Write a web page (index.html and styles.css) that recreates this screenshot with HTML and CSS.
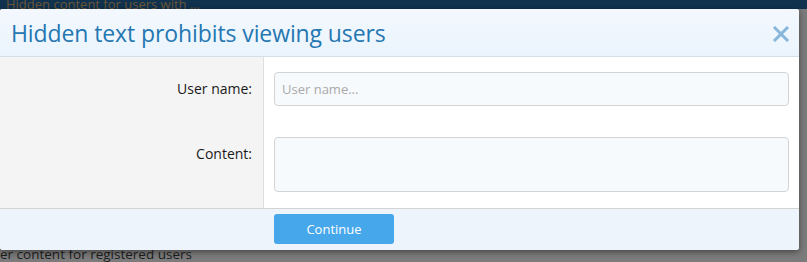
FILE: index.html
```html
<!DOCTYPE html>
<html lang="en">
<head>
    <meta charset="UTF-8">
    <title>Hidden text prohibits viewing users</title>
    <link rel="stylesheet" href="styles.css">
</head>
<body>

    <!-- Page under the overlay -->
    <div class="page">
        <div class="topbar"><span>Hidden content for users with ...</span></div>
        <p class="page-text">er content for registered users</p>
    </div>

    <!-- Dialog -->
    <div class="overlay">
        <div class="modal">
            <div class="modal-header">
                <h2>Hidden text prohibits viewing users</h2>
                <span class="close">
                    <svg width="16" height="16" viewBox="0 0 16 16">
                        <path d="M2 2 L14 14 M14 2 L2 14" stroke="#86b6da" stroke-width="3" stroke-linecap="square"/>
                    </svg>
                </span>
            </div>
            <div class="modal-body">
                <div class="row">
                    <label class="label">User name:</label>
                    <div class="field"><input type="text" placeholder="User name..."></div>
                </div>
                <div class="row">
                    <label class="label">Content:</label>
                    <div class="field"><textarea></textarea></div>
                </div>
            </div>
            <div class="modal-footer">
                <button>Continue</button>
            </div>
        </div>
    </div>

</body>
</html>
```

FILE: styles.css
```css
body {
    margin: 0;
    font-family: "Open Sans", "Noto Sans", sans-serif;
    background-color: #7b7b7b;
    height: 262px;
    overflow: hidden;
}
.topbar {
    height: 9px;
    background-color: #10324f;
    overflow: hidden;
    font-size: 13px;
    line-height: 13px;
    color: #6d5637;
}
.topbar span {
    display: block;
    margin-top: -2px;
    padding-left: 6px;
}
.page-text {
    margin: 237px 0 0 0;
    font-size: 13.5px;
    color: #1d1d1d;
    line-height: 16px;
}
.overlay {
    position: absolute;
    top: 9px;
    left: 0;
}
.modal {
    width: 799px;
    background: white;
    border-radius: 3px;
    box-shadow: 0 2px 6px rgba(0, 0, 0, 0.45);
    overflow: hidden;
}
.modal-header {
    display: flex;
    align-items: center;
    justify-content: space-between;
    height: 47px;
    padding: 0 10px 0 11px;
    background: linear-gradient(#f3f8fe, #ebf4fd);
    border-bottom: 1px solid #d6dfe8;
}
.modal-header h2 {
    margin: 0;
    font-size: 23px;
    font-weight: normal;
    color: #2577b1;
    letter-spacing: -0.1px;
}
.close {
    display: flex;
    margin-top: 2px;
}
.modal-body {
    display: grid;
    grid-template-columns: 264px 1fr;
}
.row {
    display: contents;
}
.label {
    background-color: #f4f4f4;
    border-right: 1px solid #dedede;
    text-align: right;
    font-size: 14px;
    color: #1a1a1a;
    padding: 15px 11px 16px 0;
    line-height: 34px;
}
.field {
    padding: 15px 10px 16px 10px;
}
input, textarea {
    display: block;
    box-sizing: border-box;
    width: 100%;
    border: 1px solid #d3d3d3;
    border-radius: 4px;
    background-color: #f7fafd;
    font-family: inherit;
    font-size: 13px;
    margin: 0;
}
input {
    height: 34px;
    padding: 0 7px;
}
input::placeholder {
    color: #a9a9a9;
}
textarea {
    height: 55px;
    resize: none;
}
.modal-footer {
    display: flex;
    justify-content: center;
    padding: 5px 0 6px 0;
    background-color: #edf4fc;
    border-top: 1px solid #d3d3d3;
}
button {
    width: 120px;
    height: 30px;
    margin-left: -131px;
    background-color: #47a7eb;
    color: white;
    border: none;
    border-radius: 3px;
    font-family: inherit;
    font-size: 13px;
}
```
